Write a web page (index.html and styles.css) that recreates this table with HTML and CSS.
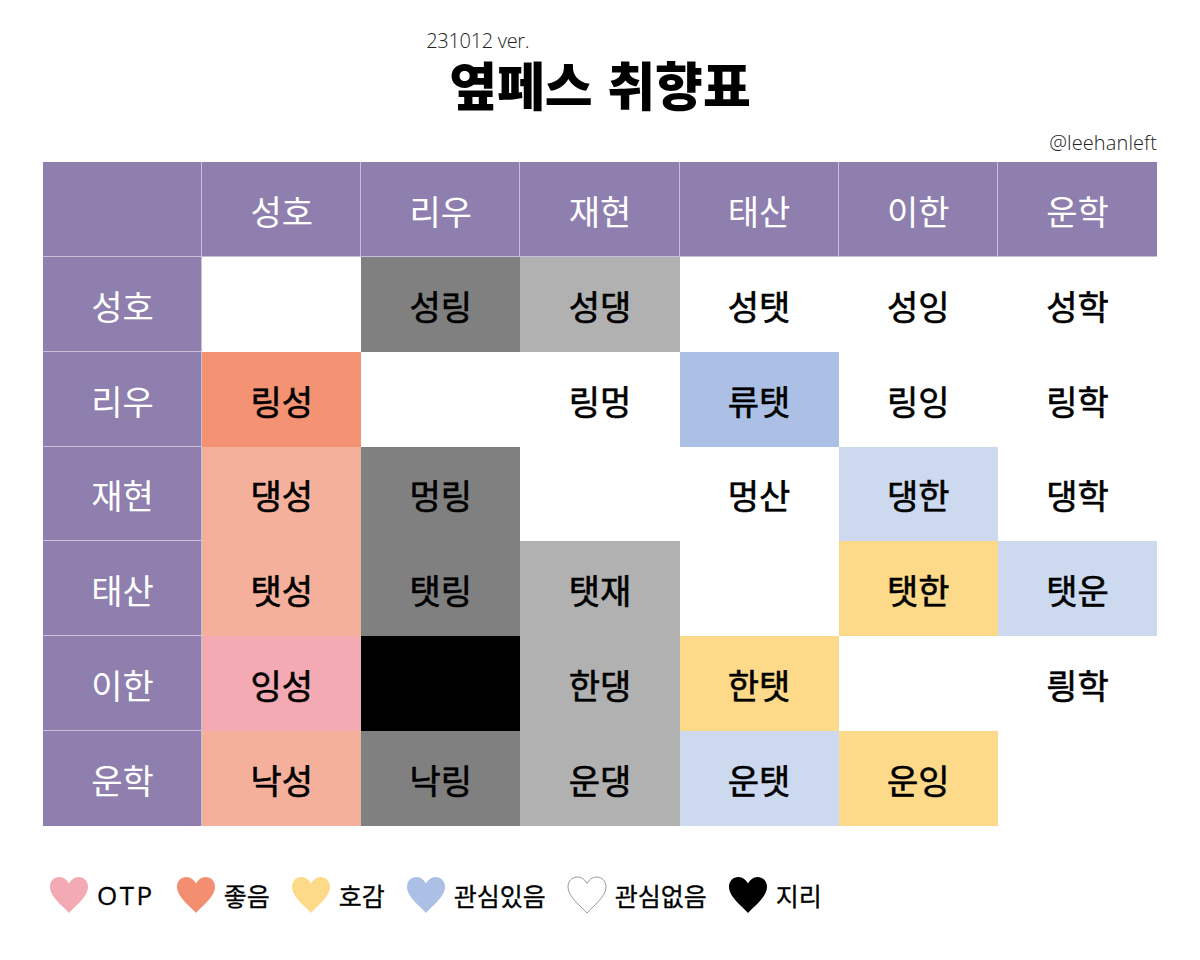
FILE: index.html
```html
<!DOCTYPE html>
<html lang="ko">
<head>
<meta charset="utf-8">
<title>옆페스 취향표</title>
<link rel="stylesheet" href="styles.css">
</head>
<body>
<div class="page">
  <header class="head">
    <div class="title-wrap">
      <div class="ver">231012 ver.</div>
      <h1 class="title">옆페스 취향표</h1>
    </div>
  </header>
  <div class="handle">@leehanleft</div>
  <div class="grid">
    <div class="c h"></div><div class="c h">성호</div><div class="c h">리우</div><div class="c h">재현</div><div class="c h">태산</div><div class="c h">이한</div><div class="c h last-col">운학</div>

    <div class="c h">성호</div><div class="c"></div><div class="c dg">성링</div><div class="c lg">성댕</div><div class="c">성탯</div><div class="c">성잉</div><div class="c">성학</div>

    <div class="c h">리우</div><div class="c sal">링성</div><div class="c"></div><div class="c">링멍</div><div class="c blu">류탯</div><div class="c">링잉</div><div class="c">링학</div>

    <div class="c h">재현</div><div class="c lsal">댕성</div><div class="c dg">멍링</div><div class="c"></div><div class="c">멍산</div><div class="c lblu">댕한</div><div class="c">댕학</div>

    <div class="c h">태산</div><div class="c lsal">탯성</div><div class="c dg">탯링</div><div class="c lg">탯재</div><div class="c"></div><div class="c yel">탯한</div><div class="c lblu">탯운</div>

    <div class="c h">이한</div><div class="c pink">잉성</div><div class="c blk"></div><div class="c lg">한댕</div><div class="c yel">한탯</div><div class="c"></div><div class="c">릥학</div>

    <div class="c h last-row">운학</div><div class="c lsal">낙성</div><div class="c dg">낙링</div><div class="c lg">운댕</div><div class="c lblu">운탯</div><div class="c yel">운잉</div><div class="c"></div>
  </div>
  <div class="legend">
    <div class="item"><svg class="heart" viewBox="0 0 42 40"><path class="hp pink-f" d="M21 38 C16 32 2 22 2 12 C2 6 6 2 11.5 2 C16 2 19 5 21 8.5 C23 5 26 2 30.5 2 C36 2 40 6 40 12 C40 22 26 32 21 38 Z"/></svg><span class="lat">OTP</span></div>
    <div class="item"><svg class="heart" viewBox="0 0 42 40"><path class="hp sal-f" d="M21 38 C16 32 2 22 2 12 C2 6 6 2 11.5 2 C16 2 19 5 21 8.5 C23 5 26 2 30.5 2 C36 2 40 6 40 12 C40 22 26 32 21 38 Z"/></svg><span>좋음</span></div>
    <div class="item"><svg class="heart" viewBox="0 0 42 40"><path class="hp yel-f" d="M21 38 C16 32 2 22 2 12 C2 6 6 2 11.5 2 C16 2 19 5 21 8.5 C23 5 26 2 30.5 2 C36 2 40 6 40 12 C40 22 26 32 21 38 Z"/></svg><span>호감</span></div>
    <div class="item"><svg class="heart" viewBox="0 0 42 40"><path class="hp blu-f" d="M21 38 C16 32 2 22 2 12 C2 6 6 2 11.5 2 C16 2 19 5 21 8.5 C23 5 26 2 30.5 2 C36 2 40 6 40 12 C40 22 26 32 21 38 Z"/></svg><span>관심있음</span></div>
    <div class="item"><svg class="heart" viewBox="0 0 42 40"><path class="hp wht-f" d="M21 38 C16 32 2 22 2 12 C2 6 6 2 11.5 2 C16 2 19 5 21 8.5 C23 5 26 2 30.5 2 C36 2 40 6 40 12 C40 22 26 32 21 38 Z"/></svg><span>관심없음</span></div>
    <div class="item"><svg class="heart" viewBox="0 0 42 40"><path class="hp blk-f" d="M21 38 C16 32 2 22 2 12 C2 6 6 2 11.5 2 C16 2 19 5 21 8.5 C23 5 26 2 30.5 2 C36 2 40 6 40 12 C40 22 26 32 21 38 Z"/></svg><span>지리</span></div>
  </div>
</div>
</body>
</html>
```
FILE: styles.css
```css
html, body {
  margin: 0;
  padding: 0;
  background: #ffffff;
}
body {
  font-family: "Noto Sans CJK KR", "Noto Sans", sans-serif;
  color: #000;
}
.page {
  width: 1200px;
  height: 960px;
  box-sizing: border-box;
  padding: 30px 43px 0 43px;
}
.head {
  display: flex;
  justify-content: center;
}
.title-wrap {
  display: flex;
  flex-direction: column;
}
.ver {
  font-family: "Open Sans", "Noto Sans", sans-serif;
  font-weight: 300;
  font-size: 20px;
  line-height: 22px;
  color: #222;
  margin-left: -23px;
  letter-spacing: -0.3px;
}
.title {
  margin: 8px 0 0 0;
  font-size: 52px;
  font-weight: 900;
  line-height: 48px;
}
.handle {
  text-align: right;
  font-family: "Open Sans", "Noto Sans", sans-serif;
  font-weight: 300;
  font-size: 20px;
  line-height: 24px;
  color: #222;
  margin-top: 23px;
  height: 31px;
  letter-spacing: 0.1px;
}
.grid {
  width: 1114px;
  height: 664px;
  display: grid;
  grid-template-columns: repeat(7, 1fr);
  grid-template-rows: repeat(7, 1fr);
}
.c {
  display: flex;
  align-items: center;
  justify-content: center;
  font-size: 34px;
  font-weight: 400;
  -webkit-text-stroke: 0.6px #000;
  background: #ffffff;
  padding-top: 2px;
  box-sizing: border-box;
}
.h {
  background: #8e7fae;
  color: #ffffff;
  font-weight: 400;
  -webkit-text-stroke: 0;
  box-shadow: inset -1px -1px 0 #c9bfdb;
}
.h.last-col {
  box-shadow: inset 0 -1px 0 #c9bfdb;
}
.h.last-row {
  box-shadow: inset -1px 0 0 #c9bfdb;
}
.dg { background: #808080; }
.lg { background: #b1b1b1; }
.sal { background: #f39373; }
.lsal { background: #f5b09b; }
.pink { background: #f4aab2; }
.blu { background: #abc0e4; }
.lblu { background: #cdd9ef; }
.yel { background: #fdd98a; }
.blk { background: #000000; }

.legend {
  display: flex;
  align-items: center;
  gap: 20px;
  margin-top: 49px;
  padding-left: 5px;
}
.item {
  display: flex;
  align-items: center;
  gap: 7px;
  font-size: 25px;
  font-weight: 400;
  -webkit-text-stroke: 0.3px #000;
}
.lat {
  font-family: "Open Sans", "Noto Sans", sans-serif;
  font-size: 26px;
  letter-spacing: 2.5px;
}
.heart {
  width: 42px;
  height: 40px;
}
.hp { stroke: none; }
.pink-f { fill: #f4aab2; }
.sal-f { fill: #f38e70; }
.yel-f { fill: #fdd98a; }
.blu-f { fill: #abc0e4; }
.wht-f { fill: #ffffff; stroke: #9a9a9a; stroke-width: 1; }
.blk-f { fill: #000000; }
```
